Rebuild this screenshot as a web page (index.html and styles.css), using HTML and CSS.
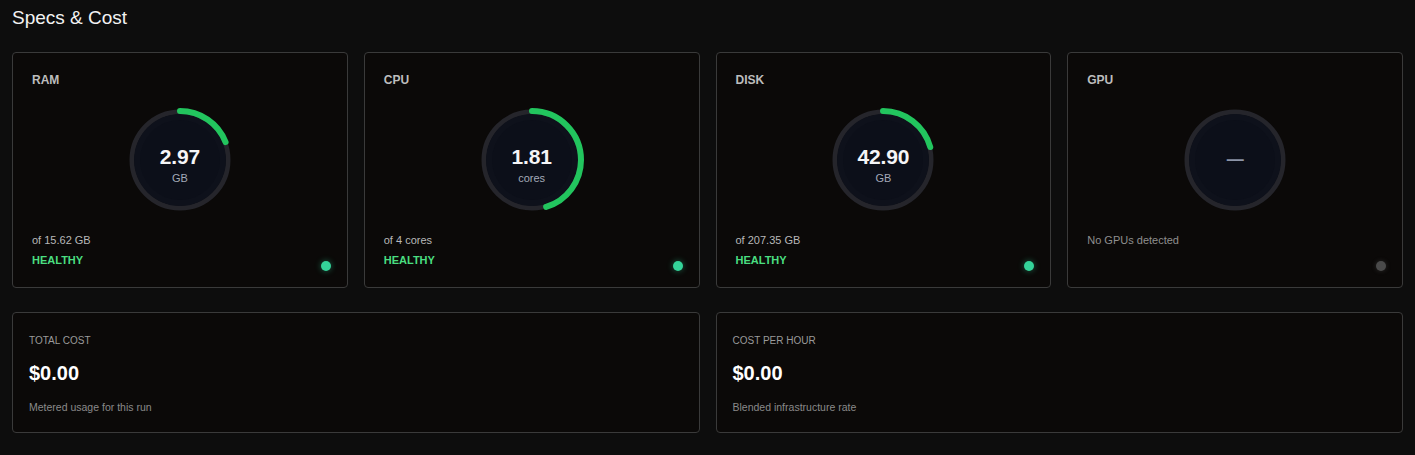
FILE: index.html
```html
<!DOCTYPE html>
<html lang="en">
<head>
<meta charset="utf-8">
<title>Specs &amp; Cost</title>
<link rel="stylesheet" href="styles.css">
</head>
<body>
<main class="page">
  <h1 class="title">Specs &amp; Cost</h1>

  <section class="spec-grid">
    <article class="card spec">
      <div class="spec-label">RAM</div>
      <div class="gauge">
        <svg class="gauge-svg" viewBox="0 0 104 104" width="104" height="104">
          <circle cx="52" cy="52" r="48" class="g-track"/>
          <circle cx="52" cy="52" r="46" class="g-disk"/>
          <circle cx="52" cy="52" r="40" class="g-core"/>
          <circle cx="52" cy="52" r="49" class="g-arc" stroke-dasharray="58.5 400" transform="rotate(-90 52 52)"/>
        </svg>
        <div class="gauge-text">
          <span class="g-value">2.97</span>
          <span class="g-unit">GB</span>
        </div>
      </div>
      <div class="spec-foot">
        <div class="spec-of">of 15.62 GB</div>
        <div class="spec-status">HEALTHY</div>
      </div>
      <span class="dot dot-ok"></span>
    </article>

    <article class="card spec">
      <div class="spec-label">CPU</div>
      <div class="gauge">
        <svg class="gauge-svg" viewBox="0 0 104 104" width="104" height="104">
          <circle cx="52" cy="52" r="48" class="g-track"/>
          <circle cx="52" cy="52" r="46" class="g-disk"/>
          <circle cx="52" cy="52" r="40" class="g-core"/>
          <circle cx="52" cy="52" r="49" class="g-arc" stroke-dasharray="139.3 400" transform="rotate(-90 52 52)"/>
        </svg>
        <div class="gauge-text">
          <span class="g-value">1.81</span>
          <span class="g-unit">cores</span>
        </div>
      </div>
      <div class="spec-foot">
        <div class="spec-of">of 4 cores</div>
        <div class="spec-status">HEALTHY</div>
      </div>
      <span class="dot dot-ok"></span>
    </article>

    <article class="card spec">
      <div class="spec-label">DISK</div>
      <div class="gauge">
        <svg class="gauge-svg" viewBox="0 0 104 104" width="104" height="104">
          <circle cx="52" cy="52" r="48" class="g-track"/>
          <circle cx="52" cy="52" r="46" class="g-disk"/>
          <circle cx="52" cy="52" r="40" class="g-core"/>
          <circle cx="52" cy="52" r="49" class="g-arc" stroke-dasharray="63.7 400" transform="rotate(-90 52 52)"/>
        </svg>
        <div class="gauge-text">
          <span class="g-value">42.90</span>
          <span class="g-unit">GB</span>
        </div>
      </div>
      <div class="spec-foot">
        <div class="spec-of">of 207.35 GB</div>
        <div class="spec-status">HEALTHY</div>
      </div>
      <span class="dot dot-ok"></span>
    </article>

    <article class="card spec">
      <div class="spec-label">GPU</div>
      <div class="gauge">
        <svg class="gauge-svg" viewBox="0 0 104 104" width="104" height="104">
          <circle cx="52" cy="52" r="48" class="g-track"/>
          <circle cx="52" cy="52" r="46" class="g-disk"/>
          <circle cx="52" cy="52" r="40" class="g-core"/>
        </svg>
        <div class="gauge-text gauge-empty">
          <span class="g-dash">—</span>
        </div>
      </div>
      <div class="spec-foot">
        <div class="spec-of spec-none">No GPUs detected</div>
      </div>
      <span class="dot dot-off"></span>
    </article>
  </section>

  <section class="cost-grid">
    <article class="card cost">
      <div class="cost-label">TOTAL COST</div>
      <div class="cost-value">$0.00</div>
      <div class="cost-desc">Metered usage for this run</div>
    </article>
    <article class="card cost">
      <div class="cost-label">COST PER HOUR</div>
      <div class="cost-value">$0.00</div>
      <div class="cost-desc">Blended infrastructure rate</div>
    </article>
  </section>
</main>
</body>
</html>
```

FILE: styles.css
```css
* { box-sizing: border-box; }

html, body {
  margin: 0;
  padding: 0;
  background: #0d0d0d;
  font-family: "Liberation Sans", Arial, sans-serif;
  color: #f2f2f2;
}

.page {
  padding: 6px 12px 12px;
}

.title {
  margin: 0 0 22px;
  font-size: 19px;
  line-height: 24px;
  font-weight: 400;
  color: #f2f2f2;
}

.spec-grid {
  display: grid;
  grid-template-columns: repeat(4, 1fr);
  gap: 16px;
}

.cost-grid {
  display: grid;
  grid-template-columns: repeat(2, 1fr);
  gap: 16px;
  margin-top: 24px;
}

.card {
  background: #0b0908;
  border: 1px solid #3a3a3a;
  border-radius: 4px;
}

.spec {
  position: relative;
  display: flex;
  flex-direction: column;
  padding: 19px;
}

.spec-label {
  font-size: 12px;
  line-height: 16px;
  font-weight: 700;
  color: #bdbdbd;
}

.gauge {
  position: relative;
  width: 104px;
  height: 104px;
  margin: 20px auto 0;
}

.gauge-svg {
  position: absolute;
  left: 0;
  top: 0;
  display: block;
}

.g-track {
  fill: none;
  stroke: #25252b;
  stroke-width: 5;
}

.g-disk {
  fill: #0e111b;
}

.g-core {
  fill: #0c0f19;
}

.g-arc {
  fill: none;
  stroke: #22c55e;
  stroke-width: 6;
  stroke-linecap: round;
}

.gauge-text {
  position: absolute;
  inset: 0;
  display: flex;
  flex-direction: column;
  align-items: center;
  justify-content: center;
  padding-top: 10px;
}

.gauge-empty {
  padding-top: 0;
}

.g-value {
  font-size: 21px;
  line-height: 24px;
  font-weight: 700;
  color: #f5f5f7;
  letter-spacing: -0.2px;
}

.g-unit {
  margin-top: 2px;
  font-size: 11px;
  line-height: 14px;
  color: #a3a9b8;
}

.g-dash {
  font-size: 17px;
  line-height: 20px;
  font-weight: 700;
  color: #8d95a8;
}

.spec-foot {
  margin-top: 20px;
}

.spec-of {
  font-size: 11px;
  line-height: 16px;
  color: #b8b8b8;
}

.spec-none {
  color: #8f8f8f;
}

.spec-status {
  margin-top: 4px;
  font-size: 11px;
  line-height: 16px;
  font-weight: 700;
  color: #4ade80;
}

.dot {
  position: absolute;
  right: 16px;
  bottom: 16px;
  width: 10px;
  height: 10px;
  border-radius: 50%;
}

.dot-ok {
  background: #34d399;
  box-shadow: 0 0 6px rgba(52, 211, 153, 0.45);
}

.dot-off {
  background: #4a4a4a;
  box-shadow: 0 0 5px rgba(120, 120, 120, 0.3);
}

.cost {
  padding: 19px 16px 17px;
}

.cost-label {
  font-size: 10px;
  line-height: 18px;
  color: #9a9a9a;
}

.cost-value {
  margin-top: 9px;
  font-size: 20px;
  line-height: 28px;
  font-weight: 700;
  color: #ffffff;
}

.cost-desc {
  margin-top: 12px;
  font-size: 10.5px;
  line-height: 16px;
  color: #8a8a8a;
}
```
